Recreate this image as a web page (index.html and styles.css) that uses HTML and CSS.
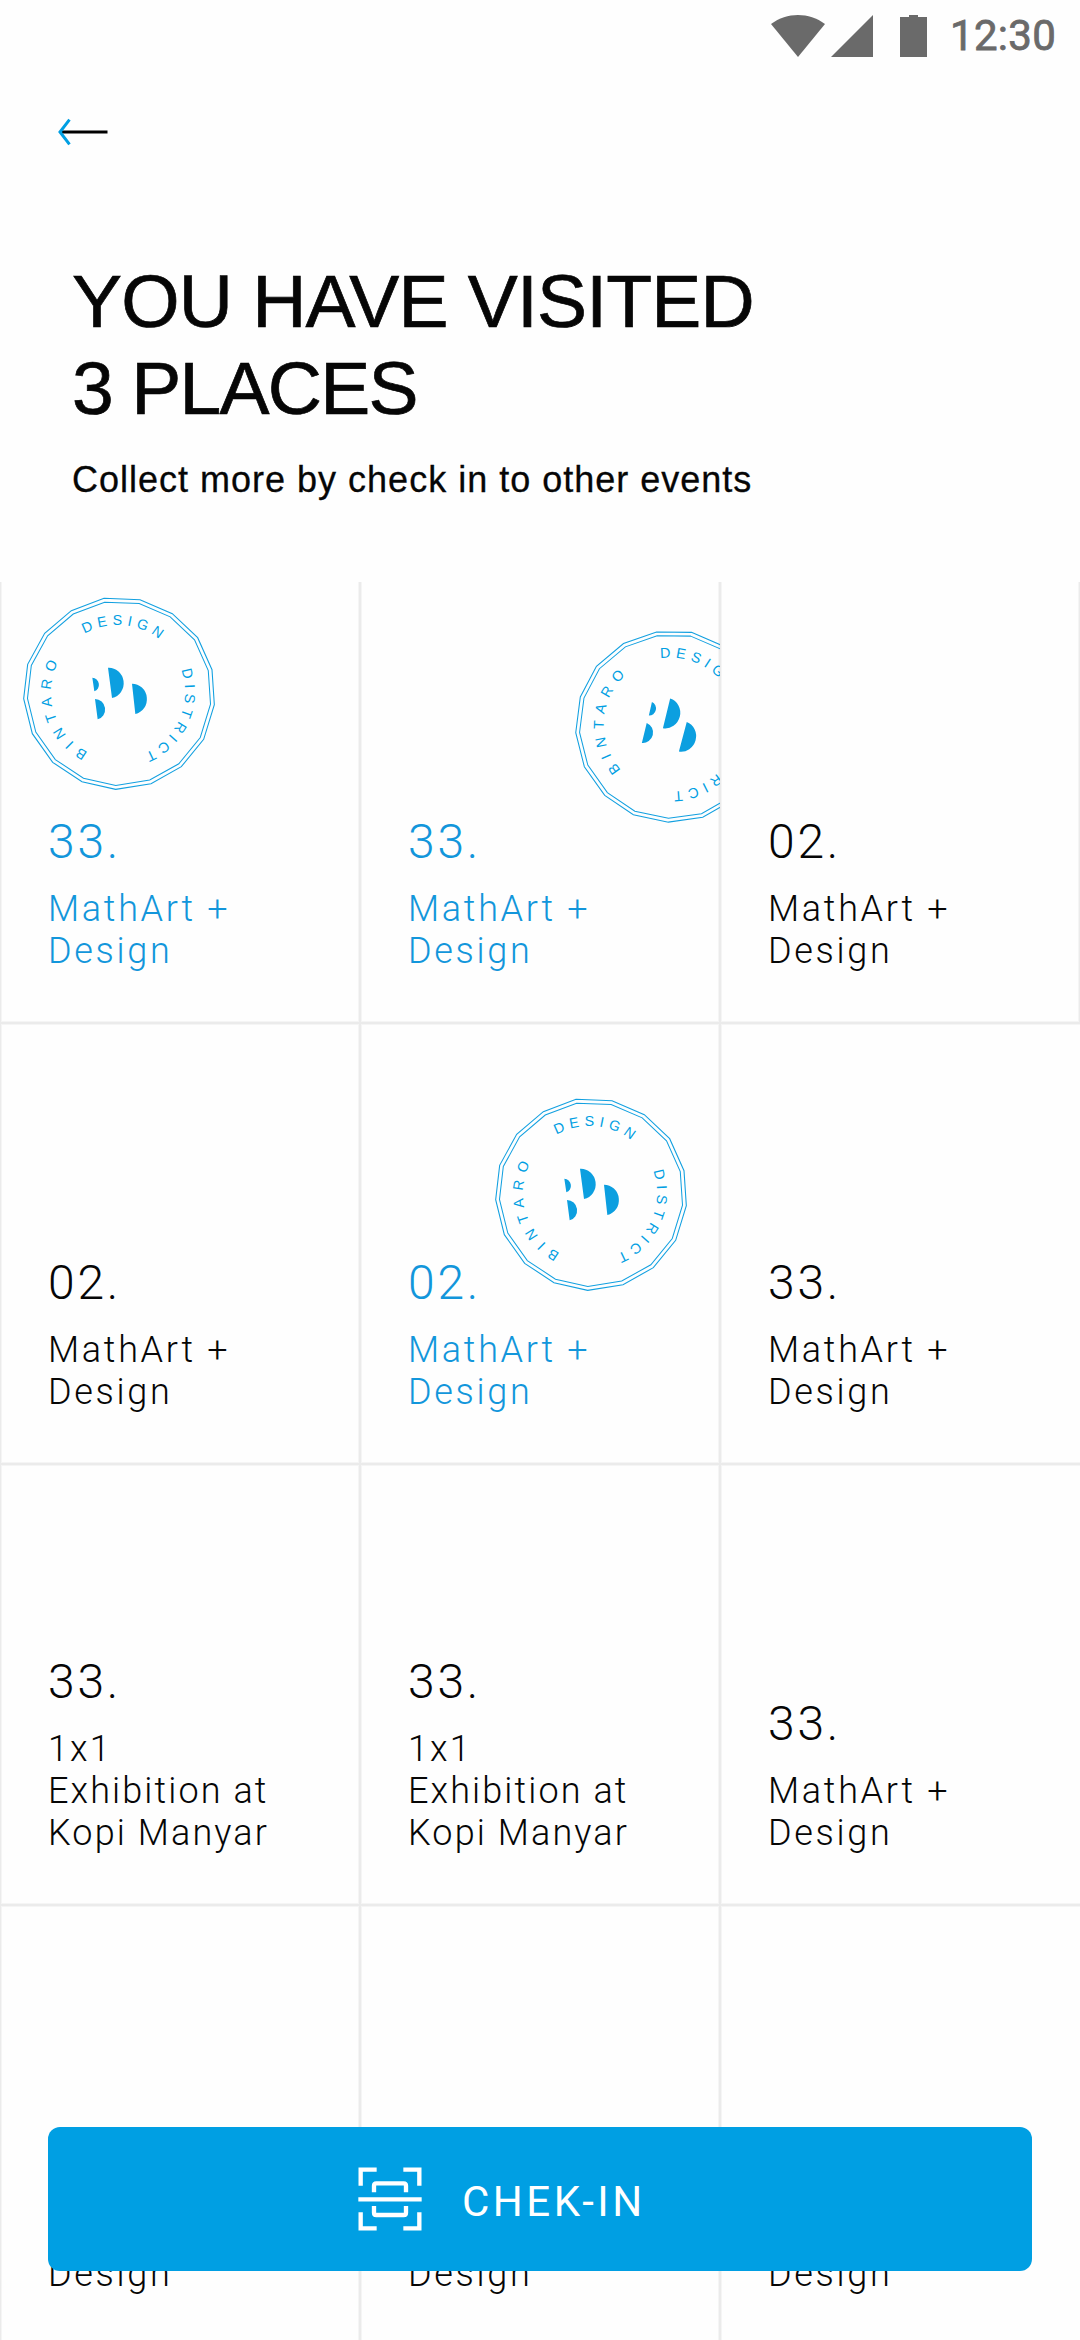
FILE: index.html
```html
<!DOCTYPE html>
<html lang="en">
<head>
    <meta charset="UTF-8">
    <meta name="viewport" content="width=device-width, initial-scale=1.0">
    <title>Visited Places</title>
    <link rel="stylesheet" href="styles.css">
</head>
<body>
    <!-- shared stamp artwork -->
    <svg class="defs" width="0" height="0">
        <defs>
            <path id="ring" d="M354 165 a201 201 0 0 1 0 402 a201 201 0 0 1 0 -402"/>
            <symbol id="stamp" viewBox="0 0 720 720">
                <polygon class="stamp-line" points="312,85 420,89 517,131 593,203 636,299 643,404 611,508 544,590 453,641 347,658 246,635 158,577 97,491 71,386 83,283 134,190 214,122"/>
                <polygon class="stamp-line" transform="translate(357 371) scale(.96) translate(-357 -371)" points="312,85 420,89 517,131 593,203 636,299 643,404 611,508 544,590 453,641 347,658 246,635 158,577 97,491 71,386 83,283 134,190 214,122"/>
                <text class="stamp-text" transform="rotate(-30 354 366)"><textPath href="#ring">DESIGN</textPath></text>
                <text class="stamp-text" transform="rotate(70.5 354 366)"><textPath href="#ring">DISTRICT</textPath></text>
                <text class="stamp-text wide" transform="rotate(206.5 354 366)"><textPath href="#ring">BINTARO</textPath></text>
                <path class="stamp-fill" d="M324 293 A44 46 -7 0 1 336 384Z M396 341 A44 46 -7 0 1 406 432Z M277 323 A20 21 -7 0 1 283 364Z M285 387 A30 31 -7 0 1 293 448Z"/>
            </symbol>
        </defs>
    </svg>

    <div class="screen">
        <div class="status-bar">
            <svg class="status-icons" width="156" height="42" viewBox="0 0 156 42">
                <path d="M0 9 C16 -3 38 -3 54 9 L27 42Z"/>
                <path d="M60 42 L102 0 V42Z"/>
                <path d="M129 2 h9 v-2 h9 v2 h9 v40 h-27Z"/>
            </svg>
            <span class="clock">12:30</span>
        </div>

        <div class="top-nav">
            <svg width="50" height="30" viewBox="0 0 50 30">
                <path d="M4 15 H49.5" stroke="#000" stroke-width="3.2"/>
                <path d="M11.5 2.7 L2 15 L11.5 27.3" fill="none" stroke="#009fe3" stroke-width="3"/>
            </svg>
        </div>

        <header class="header">
            <h1>YOU HAVE VISITED<br><span class="count">3 PLACES</span></h1>
            <p>Collect more by check in to other events</p>
        </header>

        <main class="grid">
            <div class="cell visited">
                <svg class="stamp stamp-one"><use href="#stamp"/></svg>
                <div class="number">33.</div>
                <div class="title">MathArt +<br>Design</div>
            </div>
            <div class="cell visited">
                <svg class="stamp stamp-two"><use href="#stamp" transform="rotate(21.18 119 123.7)"/></svg>
                <div class="number">33.</div>
                <div class="title">MathArt +<br>Design</div>
            </div>
            <div class="cell">
                <div class="number">02.</div>
                <div class="title">MathArt +<br>Design</div>
            </div>
            <div class="cell">
                <div class="number">02.</div>
                <div class="title">MathArt +<br>Design</div>
            </div>
            <div class="cell visited">
                <svg class="stamp stamp-three"><use href="#stamp"/></svg>
                <div class="number">02.</div>
                <div class="title">MathArt +<br>Design</div>
            </div>
            <div class="cell open">
                <div class="number">33.</div>
                <div class="title">MathArt +<br>Design</div>
            </div>
            <div class="cell">
                <div class="number">33.</div>
                <div class="title long">1x1<br>Exhibition at<br>Kopi Manyar</div>
            </div>
            <div class="cell">
                <div class="number">33.</div>
                <div class="title long">1x1<br>Exhibition at<br>Kopi Manyar</div>
            </div>
            <div class="cell open">
                <div class="number">33.</div>
                <div class="title">MathArt +<br>Design</div>
            </div>
            <div class="cell">
                <div class="title">Design</div>
            </div>
            <div class="cell">
                <div class="title">Design</div>
            </div>
            <div class="cell open">
                <div class="title">Design</div>
            </div>
        </main>

        <button class="checkin" type="button">
            <svg width="64" height="64" viewBox="0 0 192 192" fill="none" stroke="#fff" stroke-width="13">
                <path d="M56 8 H8 V56 M136 8 H184 V56 M8 136 V184 H56 M184 136 V184 H136"/>
                <path d="M48 76 V56 Q48 49 55 49 H137 Q144 49 144 56 V76 M48 117 V137 Q48 144 55 144 H137 Q144 144 144 137 V117"/>
                <path d="M1 97 H191"/>
            </svg>
            <span>CHEK-IN</span>
        </button>
    </div>
</body>
</html>
```
FILE: styles.css
```css
* {
    box-sizing: border-box;
}
body {
    margin: 0;
    background: #fff;
    color: #060606;
    font-family: Roboto, Arial, sans-serif;
}
.defs {
    position: absolute;
}
.screen {
    position: relative;
    width: 1080px;
    height: 2340px;
    overflow: hidden;
    background: #fefefe;
}
.status-bar {
    display: flex;
    justify-content: flex-end;
    align-items: center;
    height: 72px;
    padding-right: 24px;
}
.status-icons {
    fill: #6a6a6a;
}
.clock {
    width: 106px;
    margin-left: 23px;
    font-size: 42px;
    font-weight: 400;
    line-height: 74px;
    letter-spacing: 0.3px;
    color: #6a6a6a;
    -webkit-text-stroke: 0.8px #6a6a6a;
}
.top-nav {
    height: 120px;
    padding: 45px 0 0 58px;
}
.top-nav svg {
    display: block;
}
.header {
    height: 390px;
    padding: 66px 72px 0;
}
h1 {
    margin: 0;
    font-family: "Liberation Sans", Arial, sans-serif;
    font-size: 75px;
    font-weight: 400;
    line-height: 87px;
    letter-spacing: -0.8px;
    white-space: nowrap;
    -webkit-text-stroke: 0.7px #060606;
}
.count {
    letter-spacing: -1.7px;
}
.header p {
    margin: 27px 0 0;
    font-family: "Liberation Sans", Arial, sans-serif;
    font-size: 36px;
    line-height: 42px;
    letter-spacing: 1px;
    white-space: nowrap;
    -webkit-text-stroke: 0.3px #060606;
}
/* the grid is scrolled under the header, so its top edge is cut off */
.grid {
    display: grid;
    grid-template-columns: repeat(3, 360px);
    grid-auto-rows: 441px;
    height: 1758px;
    overflow: hidden;
}
.cell {
    position: relative;
    display: flex;
    flex-direction: column;
    justify-content: flex-end;
    padding: 0 0 51px 48px;
    overflow: hidden;
    box-shadow: inset 0 0 0 1px #ebebeb, inset 0 0 0 2px #f5f5f5;
}
.cell:nth-child(-n+3) {
    margin-top: -3px;
}
.cell.open {
    margin-right: -3px;
}
.visited {
    color: #1296db;
}
.number {
    margin-bottom: 18px;
    font-size: 48px;
    font-weight: 300;
    line-height: 56px;
    letter-spacing: 2.8px;
}
.title {
    font-size: 36px;
    font-weight: 300;
    line-height: 42px;
    letter-spacing: 2.7px;
    white-space: nowrap;
}
.title.long {
    letter-spacing: 2.1px;
}
.stamp {
    position: absolute;
    width: 240px;
    height: 240px;
}
.stamp-one {
    left: 0;
    top: -9px;
}
.stamp-two {
    left: 192px;
    top: 24px;
}
.stamp-three {
    left: 112px;
    top: 48px;
}
.stamp-line {
    fill: none;
    stroke: #12a0e0;
    stroke-width: 3.2;
}
.stamp-text {
    fill: #009fe3;
    font-family: "Liberation Sans", Arial, sans-serif;
    font-size: 43px;
    letter-spacing: 14.6px;
}
.stamp-text.wide {
    letter-spacing: 21px;
}
.stamp-fill {
    fill: #0c9fe0;
}
.checkin {
    position: absolute;
    left: 48px;
    top: 2127px;
    display: flex;
    align-items: center;
    width: 984px;
    height: 144px;
    padding: 0 0 0 310px;
    border: 0;
    border-radius: 12px;
    background: #009fe3;
    color: #fff;
    font-family: Roboto, Arial, sans-serif;
    font-size: 42px;
    letter-spacing: 3.5px;
}
.checkin span {
    margin-left: 40px;
    padding-top: 4px;
}
```
